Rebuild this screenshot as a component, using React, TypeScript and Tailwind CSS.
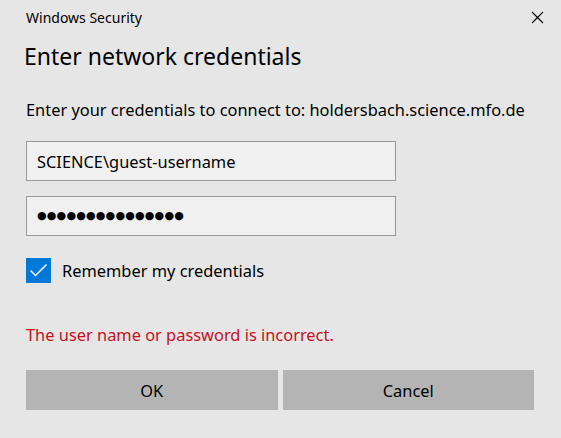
import { useState } from 'react';

export default function App() {
  const [remember, setRemember] = useState(true);
  const [username, setUsername] = useState('SCIENCE\\guest-username');

  return (
    <div
      className="w-[561px] h-[438px] bg-[#e6e6e6] text-[#000] flex flex-col overflow-hidden"
      style={{ fontFamily: '"Noto Sans", "Open Sans", sans-serif' }}
    >
      {/* title bar */}
      <div className="flex items-center justify-between h-[34px] pl-[26px] pr-[17px]">
        <span className="text-[14px] text-[#000]">Windows Security</span>
        <button className="w-[14px] h-[14px] flex items-center justify-center" aria-label="Close">
          <svg width="13" height="13" viewBox="0 0 13 13" fill="none" stroke="#000" strokeWidth="1.1">
            <path d="M1 1L12 12M12 1L1 12" />
          </svg>
        </button>
      </div>

      <div className="flex flex-col px-[26px]">
        <h1 className="text-[23px] leading-[30px] mt-[7px] ml-[-2px]">Enter network credentials</h1>

        <p className="text-[16.4px] leading-[22px] mt-[28px]">
          Enter your credentials to connect to: holdersbach.science.mfo.de
        </p>

        <input
          className="mt-[20px] w-[370px] h-[40px] border border-[#999] bg-[#f0f0f0] px-[10px] text-[16.4px] outline-none"
          value={username}
          onChange={e => setUsername(e.target.value)}
        />

        <div className="mt-[15px] w-[370px] h-[40px] border border-[#999] bg-[#f0f0f0] px-[10px] flex items-center">
          <span className="text-[11px] tracking-[0.2px]" style={{ fontFamily: '"DejaVu Sans", sans-serif' }}>
            ●●●●●●●●●●●●●●●
          </span>
        </div>

        <label className="mt-[22px] flex items-center gap-[11px] cursor-pointer">
          <button
            type="button"
            onClick={() => setRemember(!remember)}
            className={`w-[25px] h-[25px] flex items-center justify-center ${remember ? 'bg-[#0078d7]' : 'bg-transparent border border-[#333]'}`}
          >
            {remember && (
              <svg width="19" height="15" viewBox="0 0 19 15" fill="none" stroke="#fff" strokeWidth="1.5">
                <path d="M1.5 7.5L6.5 12.5L17.5 1.5" />
              </svg>
            )}
          </button>
          <span className="text-[16.4px] leading-[23px]">Remember my credentials</span>
        </label>

        <p className="mt-[40px] text-[16.4px] leading-[23px] text-[#c50f1f]">The user name or password is incorrect.</p>

        <div className="mt-[24px] flex gap-[5px] w-[508px]">
          <button className="flex-1 h-[40px] bg-[#b4b4b4] text-[16.4px] pt-[2px]">OK</button>
          <button className="flex-1 h-[40px] bg-[#b4b4b4] text-[16.4px] pt-[2px]">Cancel</button>
        </div>
      </div>
    </div>
  );
}
